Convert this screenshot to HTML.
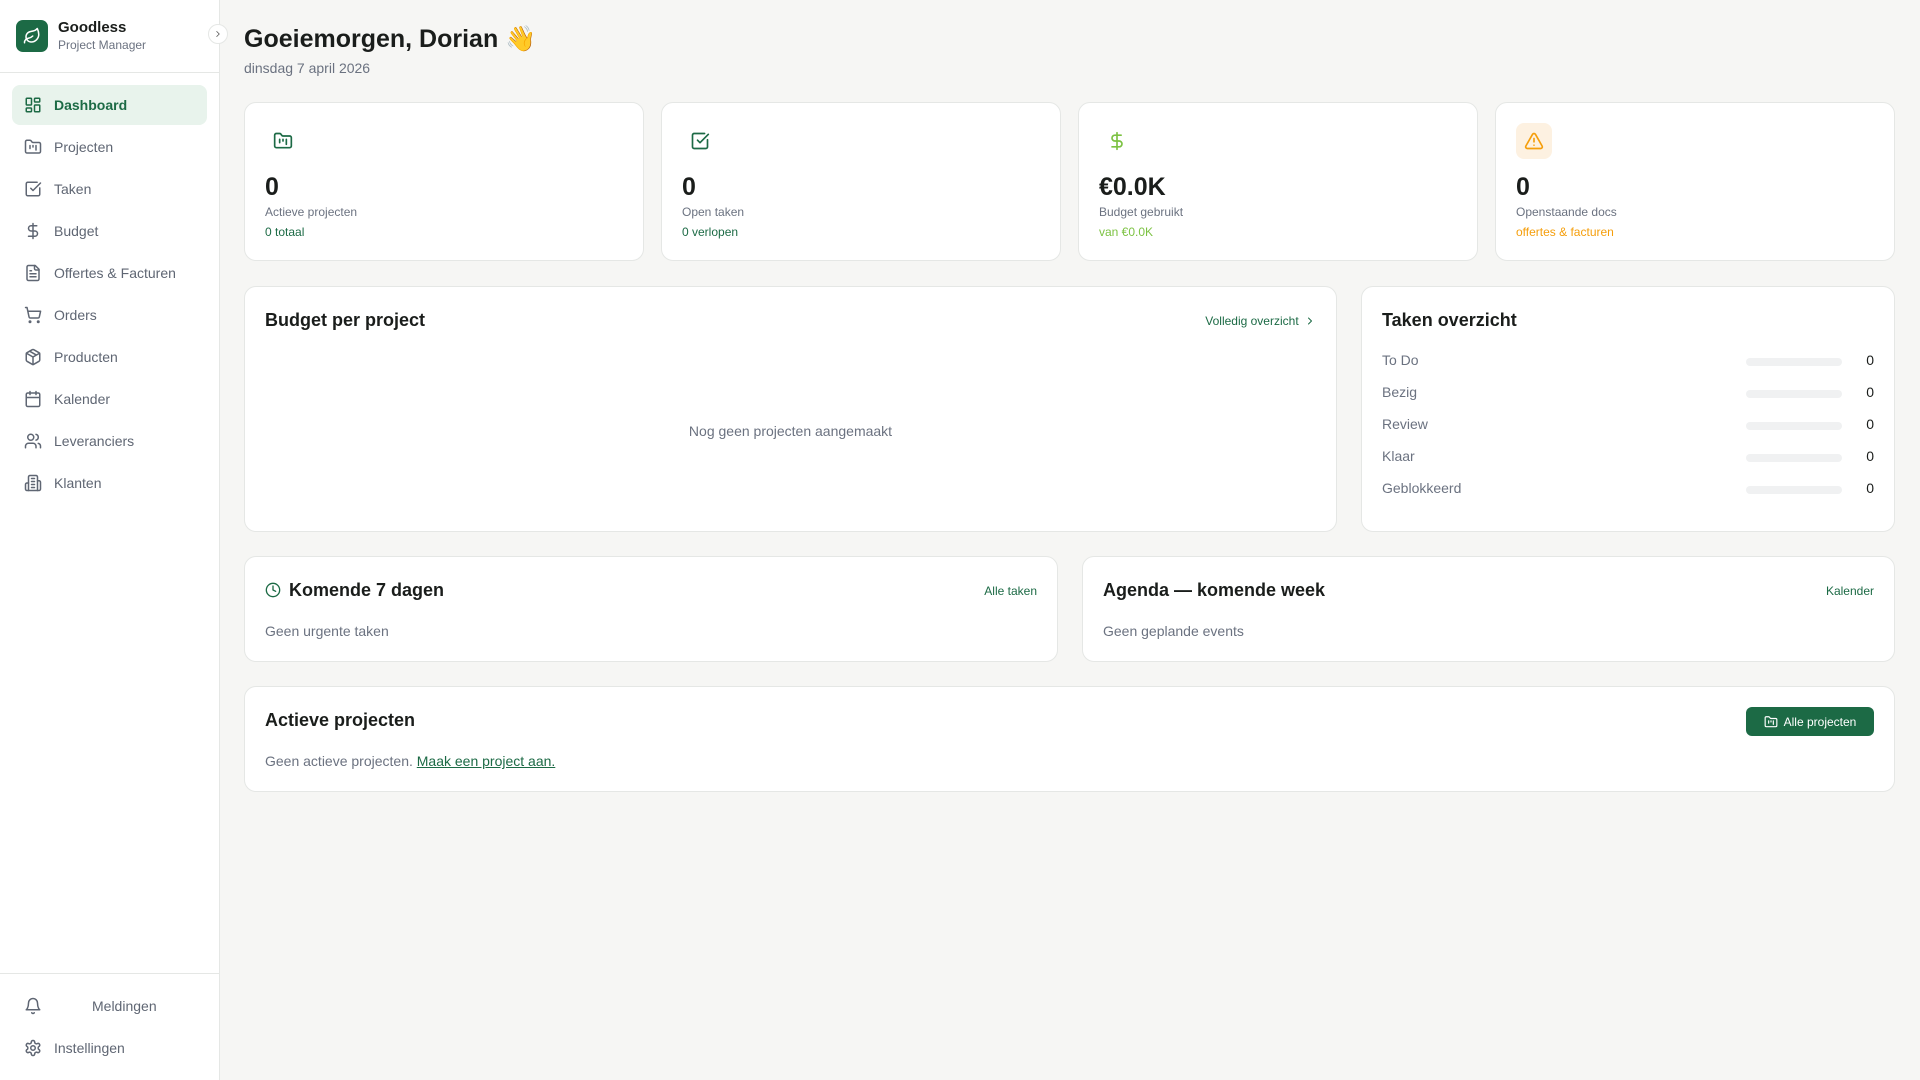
<!DOCTYPE html>
<html><head><meta charset="utf-8"><style>
*{box-sizing:border-box;margin:0;padding:0}
body{width:1920px;height:1080px;background:#f6f6f4;font-family:"Liberation Sans",sans-serif;color:#1a1d1b;position:relative;overflow:hidden}
.sb{position:absolute;left:0;top:0;width:220px;height:1080px;background:#fff;border-right:1px solid #e5e7e5}
.logo{position:absolute;left:16px;top:20px;width:32px;height:32px;border-radius:7px;background:#1c6a45;display:flex;align-items:center;justify-content:center}
.t1{position:absolute;left:58px;top:19px;font-size:15px;font-weight:bold}
.t2{position:absolute;left:58px;top:38px;font-size:12px;color:#6b7280}
.col{position:absolute;left:208px;top:24px;width:20px;height:20px;border-radius:50%;background:#fff;border:1px solid #e5e7e5;display:flex;align-items:center;justify-content:center}
.hr{position:absolute;left:0;width:219px;height:1px;background:#e5e7e5}
.nav{position:absolute;left:12px;width:195px;height:40px;border-radius:8px;display:flex;align-items:center;font-size:14px;color:#5f6673}
.nav svg{position:absolute;left:12px;top:11px}
.nav span{position:absolute;left:42px}
.nav.act{background:#e8f3ec;color:#1c6a45;font-weight:bold}
svg{fill:none;stroke:currentColor;stroke-width:2;stroke-linecap:round;stroke-linejoin:round}
.card{position:absolute;background:#fff;border:1px solid #e5e7e5;border-radius:12px}
.h1{position:absolute;left:244px;top:25px;font-size:25px;font-weight:bold}
.date{position:absolute;left:244px;top:60px;font-size:14px;color:#6b7280}
.ic{position:absolute;left:20px;top:20px;width:36px;height:36px;border-radius:8px;display:flex;align-items:center;justify-content:center}
.num{position:absolute;left:20px;top:70px;font-size:25px;font-weight:bold}
.lab{position:absolute;left:20px;top:102px;font-size:12px;color:#6b7280}
.sub{position:absolute;left:20px;top:122px;font-size:12px}
.ct{position:absolute;left:20px;font-size:18px;font-weight:bold}
.lnk{position:absolute;right:20px;font-size:12px;color:#1c6a45}
.row{position:absolute;left:20px;right:20px;height:20px;font-size:14px;color:#6b7280}
.row .bar{position:absolute;right:32px;top:6px;width:96px;height:8px;border-radius:4px;background:#f0f1f2}
.row .n{position:absolute;right:0;top:0;color:#1a1d1b}
.txt{position:absolute;left:20px;font-size:14px;color:#6b7280}
</style></head><body>
<div class="sb">
<div class="logo"><svg width="18" height="18" viewBox="0 0 24 24" style="stroke:#fff"><path d="M11 20A7 7 0 0 1 9.8 6.1C15.5 5 17 4.48 19 2c1 2 2 4.180 2 8 0 5.5-4.78 10-10 10Z"/><path d="M2 21c0-3 1.85-5.36 5.08-6C9.5 14.52 12 13 13 12"/></svg></div>
<div class="t1">Goodless</div><div class="t2">Project Manager</div>
<div class="col"><svg width="10" height="10" viewBox="0 0 24 24" style="color:#555"><path d="m9 18 6-6-6-6"/></svg></div>
<div class="hr" style="top:72px"></div>
<div class="nav act" style="top:85px"><svg width="18" height="18" viewBox="0 0 24 24"><rect x="3" y="3" width="7" height="9" rx="1"/><rect x="14" y="3" width="7" height="5" rx="1"/><rect x="14" y="12" width="7" height="9" rx="1"/><rect x="3" y="16" width="7" height="5" rx="1"/></svg><span>Dashboard</span></div>
<div class="nav" style="top:127px"><svg width="18" height="18" viewBox="0 0 24 24"><path d="M20 20a2 2 0 0 0 2-2V8a2 2 0 0 0-2-2h-7.9a2 2 0 0 1-1.69-.9L9.6 3.9A2 2 0 0 0 7.93 3H4a2 2 0 0 0-2 2v13a2 2 0 0 0 2 2Z"/><path d="M8 10v4M12 10v2M16 10v6"/></svg><span>Projecten</span></div>
<div class="nav" style="top:169px"><svg width="18" height="18" viewBox="0 0 24 24"><path d="M21 10.5V19a2 2 0 0 1-2 2H5a2 2 0 0 1-2-2V5a2 2 0 0 1 2-2h12.5"/><path d="m9 11 3 3L22 4"/></svg><span>Taken</span></div>
<div class="nav" style="top:211px"><svg width="18" height="18" viewBox="0 0 24 24"><path d="M12 2v20M17 5H9.5a3.5 3.5 0 0 0 0 7h5a3.5 3.5 0 0 1 0 7H6"/></svg><span>Budget</span></div>
<div class="nav" style="top:253px"><svg width="18" height="18" viewBox="0 0 24 24"><path d="M15 2H6a2 2 0 0 0-2 2v16a2 2 0 0 0 2 2h12a2 2 0 0 0 2-2V7Z"/><path d="M14 2v4a2 2 0 0 0 2 2h4M10 9H8M16 13H8M16 17H8"/></svg><span>Offertes &amp; Facturen</span></div>
<div class="nav" style="top:295px"><svg width="18" height="18" viewBox="0 0 24 24"><circle cx="8" cy="21" r="1"/><circle cx="19" cy="21" r="1"/><path d="M2.05 2.05h2l2.66 12.42a2 2 0 0 0 2 1.58h9.78a2 2 0 0 0 1.95-1.57l1.65-7.43H5.12"/></svg><span>Orders</span></div>
<div class="nav" style="top:337px"><svg width="18" height="18" viewBox="0 0 24 24"><path d="M21 8a2 2 0 0 0-1-1.73l-7-4a2 2 0 0 0-2 0l-7 4A2 2 0 0 0 3 8v8a2 2 0 0 0 1 1.730l7 4a2 2 0 0 0 2 0l7-4A2 2 0 0 0 21 16Z"/><path d="m3.3 7 8.7 5 8.7-5M12 22V12M7.5 4.27l9 5.15"/></svg><span>Producten</span></div>
<div class="nav" style="top:379px"><svg width="18" height="18" viewBox="0 0 24 24"><rect x="3" y="4" width="18" height="18" rx="2"/><path d="M16 2v4M8 2v4M3 10h18"/></svg><span>Kalender</span></div>
<div class="nav" style="top:421px"><svg width="18" height="18" viewBox="0 0 24 24"><path d="M16 21v-2a4 4 0 0 0-4-4H6a4 4 0 0 0-4 4v2"/><circle cx="9" cy="7" r="4"/><path d="M22 21v-2a4 4 0 0 0-3-3.870M16 3.13a4 4 0 0 1 0 7.75"/></svg><span>Leveranciers</span></div>
<div class="nav" style="top:463px"><svg width="18" height="18" viewBox="0 0 24 24"><path d="M6 22V4a2 2 0 0 1 2-2h8a2 2 0 0 1 2 2v18Z"/><path d="M6 12H4a2 2 0 0 0-2 2v6a2 2 0 0 0 2 2h2M18 9h2a2 2 0 0 1 2 2v9a2 2 0 0 1-2 2h-2M10 6h4M10 10h4M10 14h4M10 18h4"/></svg><span>Klanten</span></div>
<div class="hr" style="top:973px"></div>
<div class="nav" style="top:986px"><svg width="18" height="18" viewBox="0 0 24 24"><path d="M6 8a6 6 0 0 1 12 0c0 7 3 9 3 9H3s3-2 3-9"/><path d="M10.3 21a1.94 1.94 0 0 0 3.4 0"/></svg><span style="left:80px">Meldingen</span></div>
<div class="nav" style="top:1028px"><svg width="18" height="18" viewBox="0 0 24 24"><path d="M12.22 2h-.44a2 2 0 0 0-2 2v.18a2 2 0 0 1-1 1.73l-.43.25a2 2 0 0 1-2 0l-.15-.08a2 2 0 0 0-2.73.73l-.22.38a2 2 0 0 0 .73 2.73l.15.1a2 2 0 0 1 1 1.72v.51a2 2 0 0 1-1 1.74l-.15.09a2 2 0 0 0-.73 2.73l.22.38a2 2 0 0 0 2.73.73l.15-.08a2 2 0 0 1 2 0l.43.25a2 2 0 0 1 1 1.73V20a2 2 0 0 0 2 2h.44a2 2 0 0 0 2-2v-.18a2 2 0 0 1 1-1.73l.43-.25a2 2 0 0 1 2 0l.15.08a2 2 0 0 0 2.73-.73l.22-.39a2 2 0 0 0-.73-2.73l-.15-.08a2 2 0 0 1-1-1.74v-.5a2 2 0 0 1 1-1.74l.15-.09a2 2 0 0 0 .73-2.73l-.22-.38a2 2 0 0 0-2.73-.73l-.15.08a2 2 0 0 1-2 0l-.43-.25a2 2 0 0 1-1-1.73V4a2 2 0 0 0-2-2z"/><circle cx="12" cy="12" r="3"/></svg><span>Instellingen</span></div>
</div>

<div class="h1">Goeiemorgen, Dorian 👋</div>
<div class="date">dinsdag 7 april 2026</div>

<div class="card" style="left:244px;top:102px;width:400px;height:159px">
<div class="ic" style="color:#1c6a45"><svg width="20" height="20" viewBox="0 0 24 24"><path d="M20 20a2 2 0 0 0 2-2V8a2 2 0 0 0-2-2h-7.9a2 2 0 0 1-1.69-.9L9.6 3.9A2 2 0 0 0 7.93 3H4a2 2 0 0 0-2 2v13a2 2 0 0 0 2 2Z"/><path d="M8 10v4M12 10v2M16 10v6"/></svg></div>
<div class="num">0</div><div class="lab">Actieve projecten</div><div class="sub" style="color:#1c6a45">0 totaal</div></div>
<div class="card" style="left:661px;top:102px;width:400px;height:159px">
<div class="ic" style="color:#1c6a45"><svg width="20" height="20" viewBox="0 0 24 24"><path d="M21 10.5V19a2 2 0 0 1-2 2H5a2 2 0 0 1-2-2V5a2 2 0 0 1 2-2h12.5"/><path d="m9 11 3 3L22 4"/></svg></div>
<div class="num">0</div><div class="lab">Open taken</div><div class="sub" style="color:#1c6a45">0 verlopen</div></div>
<div class="card" style="left:1078px;top:102px;width:400px;height:159px">
<div class="ic" style="color:#7cc242"><svg width="20" height="20" viewBox="0 0 24 24"><path d="M12 2v20M17 5H9.5a3.5 3.5 0 0 0 0 7h5a3.5 3.5 0 0 1 0 7H6"/></svg></div>
<div class="num">€0.0K</div><div class="lab">Budget gebruikt</div><div class="sub" style="color:#7cc242">van €0.0K</div></div>
<div class="card" style="left:1495px;top:102px;width:400px;height:159px">
<div class="ic" style="color:#f59e0b;background:#fdf1e1"><svg width="20" height="20" viewBox="0 0 24 24"><path d="m21.73 18-8-14a2 2 0 0 0-3.48 0l-8 14A2 2 0 0 0 4 21h16a2 2 0 0 0 1.73-3"/><path d="M12 9v4M12 17h.01"/></svg></div>
<div class="num">0</div><div class="lab">Openstaande docs</div><div class="sub" style="color:#f59e0b">offertes &amp; facturen</div></div>

<div class="card" style="left:244px;top:286px;width:1093px;height:246px">
<div class="ct" style="top:23px">Budget per project</div>
<div class="lnk" style="top:27px">Volledig overzicht <svg width="12" height="12" viewBox="0 0 24 24" style="vertical-align:-2px;margin-left:2px"><path d="m9 18 6-6-6-6"/></svg></div>
<div style="position:absolute;left:0;right:0;top:136px;text-align:center;font-size:14px;color:#6b7280">Nog geen projecten aangemaakt</div></div>

<div class="card" style="left:1361px;top:286px;width:534px;height:246px">
<div class="ct" style="top:23px">Taken overzicht</div>
<div class="row" style="top:65px">To Do<div class="bar"></div><div class="n">0</div></div>
<div class="row" style="top:97px">Bezig<div class="bar"></div><div class="n">0</div></div>
<div class="row" style="top:129px">Review<div class="bar"></div><div class="n">0</div></div>
<div class="row" style="top:161px">Klaar<div class="bar"></div><div class="n">0</div></div>
<div class="row" style="top:193px">Geblokkeerd<div class="bar"></div><div class="n">0</div></div></div>

<div class="card" style="left:244px;top:556px;width:814px;height:106px">
<svg width="16" height="16" viewBox="0 0 24 24" style="position:absolute;left:20px;top:25px;color:#1c6a45"><circle cx="12" cy="12" r="10"/><path d="M12 6v6l4 2"/></svg>
<div class="ct" style="top:23px;left:44px">Komende 7 dagen</div>
<div class="lnk" style="top:27px">Alle taken</div>
<div class="txt" style="top:66px">Geen urgente taken</div></div>
<div class="card" style="left:1082px;top:556px;width:813px;height:106px">
<div class="ct" style="top:23px">Agenda — komende week</div>
<div class="lnk" style="top:27px">Kalender</div>
<div class="txt" style="top:66px">Geen geplande events</div></div>

<div class="card" style="left:244px;top:686px;width:1651px;height:106px">
<div class="ct" style="top:23px">Actieve projecten</div>
<div style="position:absolute;right:20px;top:20px;width:128px;height:29px;border-radius:6px;background:#1c6a45;color:#fff;font-size:12px;display:flex;align-items:center;justify-content:center;gap:6px"><svg width="14" height="14" viewBox="0 0 24 24"><path d="M20 20a2 2 0 0 0 2-2V8a2 2 0 0 0-2-2h-7.9a2 2 0 0 1-1.69-.9L9.6 3.9A2 2 0 0 0 7.93 3H4a2 2 0 0 0-2 2v13a2 2 0 0 0 2 2Z"/><path d="M8 10v4M12 10v2M16 10v6"/></svg>Alle projecten</div>
<div class="txt" style="top:66px">Geen actieve projecten. <span style="color:#1c6a45;text-decoration:underline">Maak een project aan.</span></div></div>
</body></html>
